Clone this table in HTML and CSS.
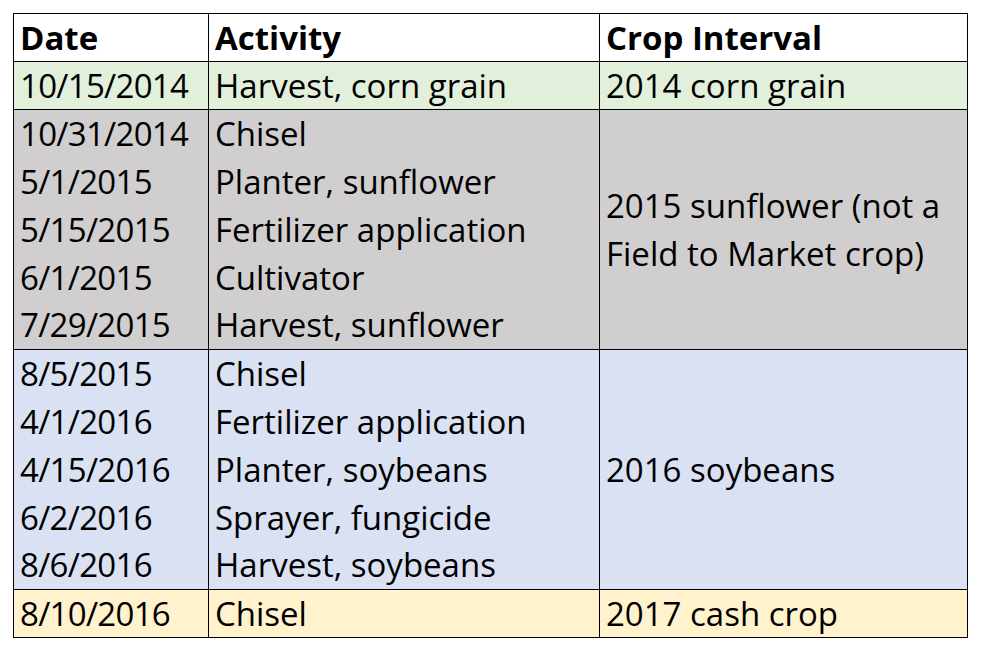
FILE: index.html
```html
<!DOCTYPE html>
<html>
<head>
<meta charset="utf-8">
<link rel="stylesheet" href="styles.css">
</head>
<body>
<table class="sched">
  <colgroup><col class="c1"><col class="c2"><col class="c3"></colgroup>
  <tr class="head"><th>Date</th><th>Activity</th><th>Crop Interval</th></tr>
  <tr class="green"><td class="date">10/15/2014</td><td>Harvest, corn grain</td><td>2014 corn grain</td></tr>
  <tr class="gray top"><td class="date">10/31/2014</td><td>Chisel</td><td rowspan="5" class="ci">2015 sunflower (not a Field to Market crop)</td></tr>
  <tr class="gray"><td class="date">5/1/2015</td><td>Planter, sunflower</td></tr>
  <tr class="gray"><td class="date">5/15/2015</td><td>Fertilizer application</td></tr>
  <tr class="gray"><td class="date">6/1/2015</td><td>Cultivator</td></tr>
  <tr class="gray"><td class="date">7/29/2015</td><td>Harvest, sunflower</td></tr>
  <tr class="blue top"><td class="date">8/5/2015</td><td>Chisel</td><td rowspan="5" class="ci">2016 soybeans</td></tr>
  <tr class="blue"><td class="date">4/1/2016</td><td>Fertilizer application</td></tr>
  <tr class="blue"><td class="date">4/15/2016</td><td>Planter, soybeans</td></tr>
  <tr class="blue"><td class="date">6/2/2016</td><td>Sprayer, fungicide</td></tr>
  <tr class="blue"><td class="date">8/6/2016</td><td>Harvest, soybeans</td></tr>
  <tr class="yellow top"><td class="date">8/10/2016</td><td>Chisel</td><td>2017 cash crop</td></tr>
</table>
</body>
</html>
```
FILE: styles.css
```css
html, body { background: #ffffff; }
body { margin: 13px 0 0 13px; font-family: "Open Sans", "Noto Sans", sans-serif; color: #000; }
.sched { border-collapse: collapse; width: 954px; table-layout: fixed; font-size: 33px; }
.c1 { width: 195px; }
.c2 { width: 391px; }
.c3 { width: 368px; }
.sched tr { height: 48px; }
.sched th, .sched td { padding: 0 0 0 6px; text-align: left; vertical-align: middle; white-space: nowrap; line-height: 40px; }
.sched th { font-weight: 700; border: 1px solid #000; }
.sched td { border-left: 1px solid #000; border-right: 1px solid #000; }
.sched td.date { letter-spacing: -0.7px; }
.sched td.ci { white-space: normal; line-height: 48px; border-bottom: 1px solid #000; }
.sched tr.green td { background: #e2efda; border-bottom: 1px solid #000; }
.sched tr.gray td { background: #d0cece; }
.sched tr.blue td { background: #d9e1f2; }
.sched tr.yellow td { background: #fff2cc; border-bottom: 1px solid #000; }
.sched tr.top td { border-top: 1px solid #000; }
```
